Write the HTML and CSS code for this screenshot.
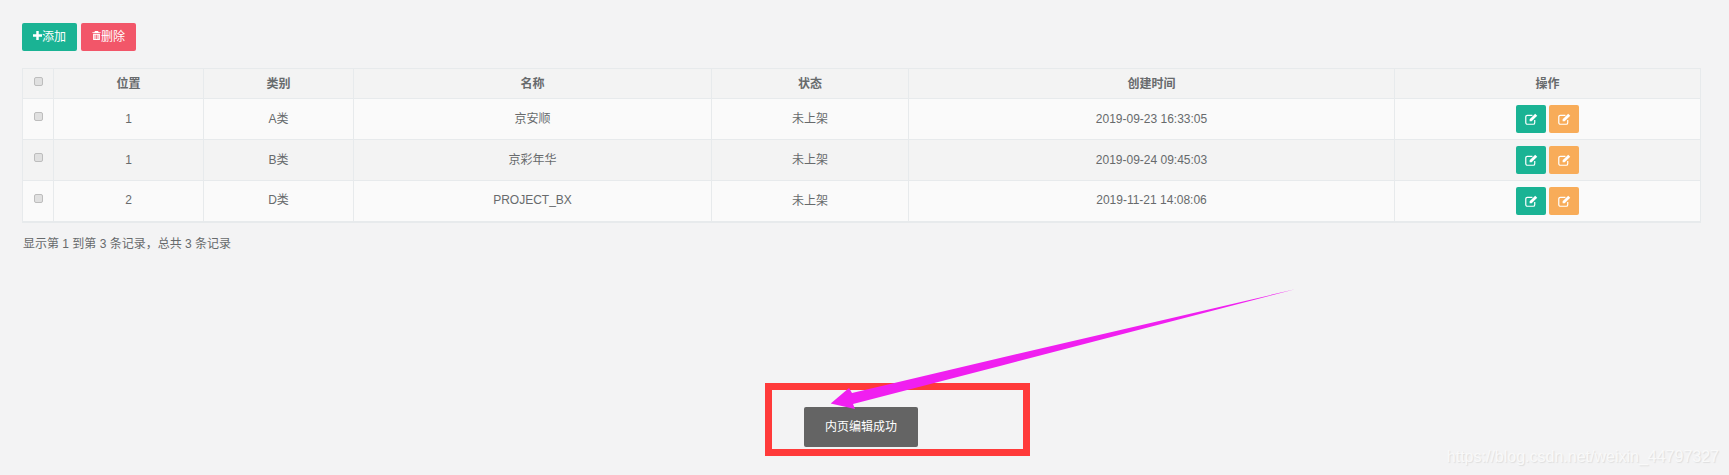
FILE: index.html
```html
<!DOCTYPE html>
<html lang="zh-CN">
<head>
<meta charset="utf-8">
<title>内页编辑</title>
<link rel="stylesheet" href="styles.css">
</head>
<body>
<main class="page">
  <div class="toolbar">
    <button class="btn btn-add"><svg class="ic" viewBox="0 0 11 11"><path d="M4 0h3v4h4v3H7v4H4V7H0V4h4z"/></svg>添加</button>
    <button class="btn btn-del"><svg class="ic" viewBox="0 0 11 12"><path d="M3.500 0h4l1 1.500H11v1.200H0V1.500h2.500zM1 3.500h9V12H1zM3 5v5.500h1V5zM5 5v5.500h1V5zM7 5v5.500h1V5z" fill-rule="evenodd"/></svg>删除</button>
  </div>
  <table class="grid">
    <colgroup>
      <col class="c0"><col class="c1"><col class="c2"><col class="c3"><col class="c4"><col class="c5"><col class="c6">
    </colgroup>
    <thead>
      <tr><th class="cell-chk"><input type="checkbox" class="chk"></th><th>位置</th><th>类别</th><th>名称</th><th>状态</th><th>创建时间</th><th>操作</th></tr>
    </thead>
    <tbody>
      <tr><td class="cell-chk"><input type="checkbox" class="chk"></td><td>1</td><td class="mixed">A类</td><td class="cjk">京安顺</td><td class="cjk">未上架</td><td>2019-09-23 16:33:05</td><td class="cell-ops"><div class="ops"><button class="op op-green"><svg class="pen" viewBox="0 0 14 13"><use href="#edit"/></svg></button><button class="op op-orange"><svg class="pen" viewBox="0 0 14 13"><use href="#edit"/></svg></button></div></td></tr>
      <tr><td class="cell-chk"><input type="checkbox" class="chk"></td><td>1</td><td class="mixed">B类</td><td class="cjk">京彩年华</td><td class="cjk">未上架</td><td>2019-09-24 09:45:03</td><td class="cell-ops"><div class="ops"><button class="op op-green"><svg class="pen" viewBox="0 0 14 13"><use href="#edit"/></svg></button><button class="op op-orange"><svg class="pen" viewBox="0 0 14 13"><use href="#edit"/></svg></button></div></td></tr>
      <tr><td class="cell-chk"><input type="checkbox" class="chk"></td><td>2</td><td class="mixed">D类</td><td>PROJECT_BX</td><td class="cjk">未上架</td><td>2019-11-21 14:08:06</td><td class="cell-ops"><div class="ops"><button class="op op-green"><svg class="pen" viewBox="0 0 14 13"><use href="#edit"/></svg></button><button class="op op-orange"><svg class="pen" viewBox="0 0 14 13"><use href="#edit"/></svg></button></div></td></tr>
    </tbody>
  </table>
  <p class="info">显示第 1 到第 3 条记录，总共 3 条记录</p>
</main>

<div class="toast">内页编辑成功</div>

<svg class="annot" viewBox="0 0 1729 475" aria-hidden="true">
  <rect class="annot-box" x="768.500" y="386.500" width="258" height="66"/>
  <path class="annot-arrow" d="M1295 289.300L1000 366 853 404 855 409 830.700 403.500 849 388 852 393 1000 358z"/>
</svg>

<div class="watermark">https://blog.csdn.net/weixin_44797327</div>

<svg class="defs" aria-hidden="true">
  <symbol id="edit" viewBox="0 0 14 13">
    <path class="pen-box" d="M10.500 7.500V10.500a1.700 1.700 0 0 1-1.700 1.700H2.500A1.700 1.700 0 0 1 .8 10.500V4.200A1.700 1.700 0 0 1 2.500 2.500H8"/>
    <path class="pen-tip" d="M11 .8l2.200 2.200-6 6H5V6.800z"/>
  </symbol>
</svg>
</body>
</html>
```
FILE: styles.css
```css
* { box-sizing: border-box; }
html, body { margin: 0; height: 100%; }
body {
  background: #f3f3f4;
  color: #676a6c;
  font-family: "Liberation Sans", "Noto Sans CJK SC", sans-serif;
  font-size: 13px;
  overflow: hidden;
}
.page { padding: 23px 28px 0 22px; }
.toolbar { display: flex; gap: 4px; height: 28px; }
.btn {
  display: flex;
  align-items: center;
  justify-content: center;
  width: 55px;
  height: 28px;
  padding: 0 0 3px;
  border: 0;
  border-radius: 2px;
  color: #fff;
  font: inherit;
  font-size: 12px;
}
.btn .ic { width: 9px; height: 9px; fill: #fff; }
.btn-add { background: #1ab394; }
.btn-del { background: #f25669; }
.grid {
  width: 1679px;
  margin-top: 17px;
  table-layout: fixed;
  border-collapse: collapse;
  border: 2px solid #e7eaec;
  border-width: 1px 1px 2px 1px;
}
.c0 { width: 31px; }
.c1, .c2 { width: 150px; }
.c3 { width: 358px; }
.c4 { width: 197px; }
.c5 { width: 486px; }
.grid th, .grid td {
  border: 1px solid #e7eaec;
  padding: 0 0 1px;
  text-align: center;
  vertical-align: middle;
}
.grid th { height: 30px; padding-bottom: 2px; background: #f3f3f3; font-weight: 700; font-size: 12px; }
.grid td { height: 41px; background: #fafafa; font-size: 12px; }
.grid td.cjk { padding-bottom: 3px; }
.grid td.mixed { padding-bottom: 4px; }
.grid td.cell-ops, .grid .cell-chk { padding: 0; }
.grid tbody tr:nth-child(2) td { background: #f3f3f3; }
.chk {
  appearance: none;
  display: block;
  width: 9px;
  height: 9px;
  margin: -5px auto 0;
  border: 1px solid #bdbdbd;
  border-radius: 2px;
  background: #e0e0e0;
}
.ops { display: flex; justify-content: center; gap: 3px; }
.op {
  display: flex;
  align-items: center;
  justify-content: center;
  width: 30px;
  height: 28px;
  padding: 0;
  border: 0;
  border-radius: 2px;
}
.op-green { background: #1ab394; }
.op-orange { background: #f8ac59; }
.pen { width: 13px; height: 12px; overflow: visible; }
.pen-box { fill: none; stroke: #fff; stroke-width: 1.300; }
.pen-tip { fill: #fff; }
.info { margin: 13px 0 0 1px; font-size: 12px; line-height: 16px; }
.toast {
  position: absolute;
  left: 804px;
  top: 407px;
  width: 114px;
  height: 40px;
  border-radius: 2px;
  background: #646464;
  color: #fff;
  font-size: 12px;
  line-height: 40px;
  text-align: center;
}
.annot { position: absolute; left: 0; top: 0; width: 1729px; height: 475px; pointer-events: none; }
.annot-box { fill: none; stroke: #ff3a3a; stroke-width: 7; }
.annot-arrow { fill: #f01ff0; }
.watermark {
  position: absolute;
  right: 10px;
  top: 447px;
  color: #f9f9f9;
  font-size: 16px;
  line-height: 20px;
  text-shadow: 1px 1px 1px #dedede;
}
.defs { position: absolute; width: 0; height: 0; }
```
